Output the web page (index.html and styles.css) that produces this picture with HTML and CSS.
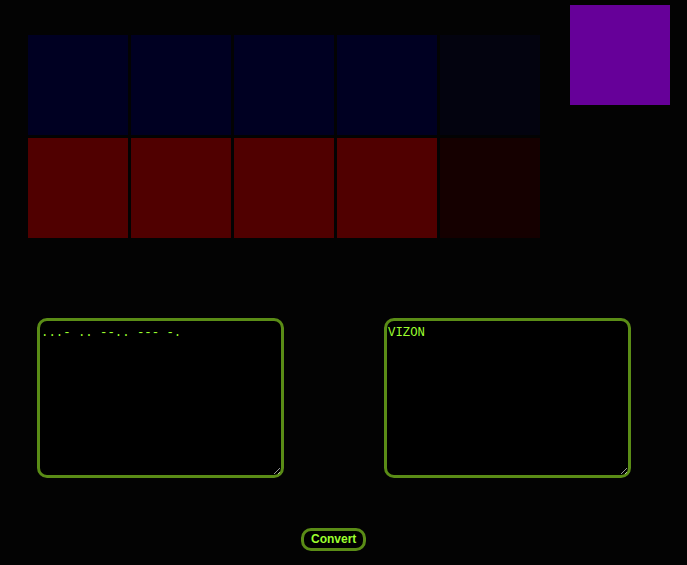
FILE: index.html
```html
<!DOCTYPE html>
<html>
<head>
<meta charset="utf-8">
<link rel="stylesheet" href="styles.css">
</head>
<body>
<div class="top">
  <div class="grid">
    <div class="cell blue"></div>
    <div class="cell blue"></div>
    <div class="cell blue"></div>
    <div class="cell blue"></div>
    <div class="cell blue-dim"></div>
    <div class="cell red"></div>
    <div class="cell red"></div>
    <div class="cell red"></div>
    <div class="cell red"></div>
    <div class="cell red-dim"></div>
  </div>
  <div class="swatch"></div>
</div>
<div class="boxes">
  <textarea class="box">...- .. --.. --- -.</textarea>
  <textarea class="box">VIZON</textarea>
</div>
<div class="actions">
  <button class="convert">Convert</button>
</div>
</body>
</html>
```

FILE: styles.css
```css
html, body {
  margin: 0;
  padding: 0;
  background: #030303;
}
body {
  width: 687px;
  height: 565px;
  overflow: hidden;
}
.top {
  display: flex;
  align-items: flex-start;
}
.grid {
  display: grid;
  grid-template-columns: repeat(5, 100px);
  grid-auto-rows: 100px;
  gap: 3px;
  margin: 35px 0 0 28px;
}
.blue { background: #000022; }
.blue-dim { background: #03030f; }
.red { background: #500000; }
.red-dim { background: #150000; }
.swatch {
  width: 100px;
  height: 100px;
  background: #660099;
  margin: 5px 0 0 30px;
}
.boxes {
  display: flex;
  gap: 100px;
  margin: 80px 0 0 37px;
}
.box {
  box-sizing: border-box;
  width: 247px;
  height: 160px;
  margin: 0;
  padding: 5px 1px 2px;
  background: #000;
  color: #9cff2e;
  border: 3px solid #5a8c16;
  border-radius: 10px;
  font-family: "Liberation Mono", monospace;
  font-size: 12.3px;
  outline: none;
}
.actions {
  margin: 50px 0 0 301px;
}
.convert {
  background: #000;
  color: #9cff2e;
  border: 3px solid #5a8c16;
  border-radius: 10px;
  font-family: "Liberation Sans", Arial, sans-serif;
  font-weight: bold;
  font-size: 12px;
  line-height: 15px;
  padding: 1px 7px;
  margin: 0;
}
```
